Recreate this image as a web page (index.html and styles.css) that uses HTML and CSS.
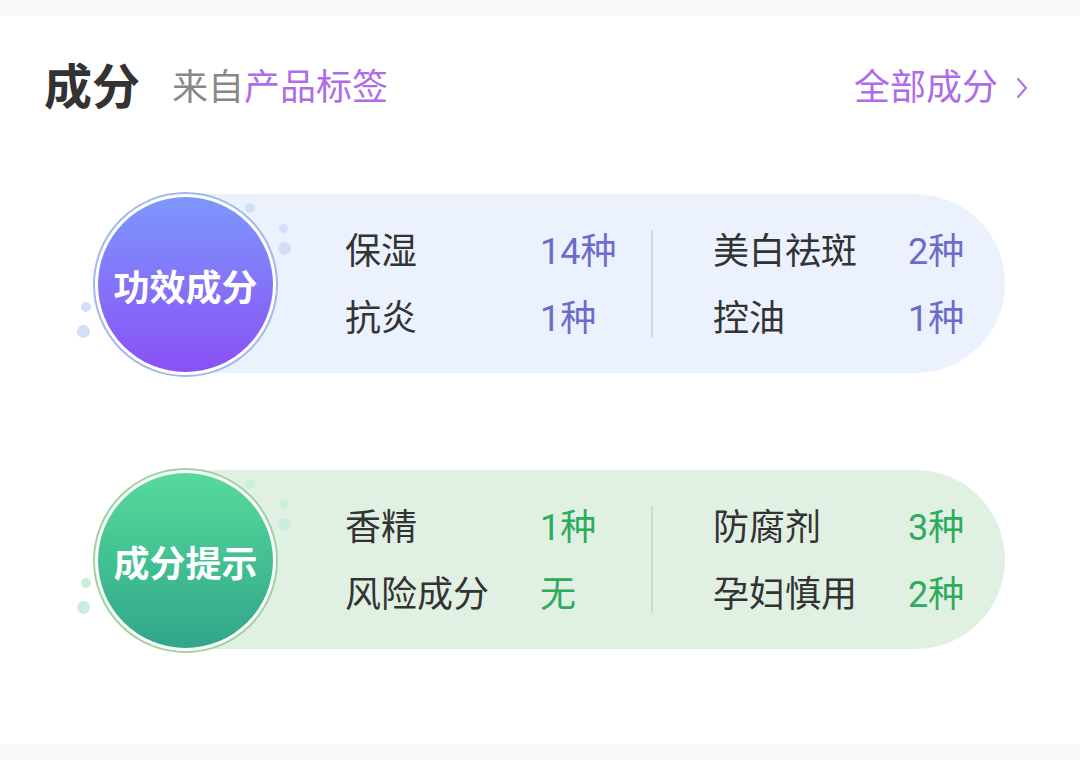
FILE: index.html
```html
<!DOCTYPE html>
<html lang="zh">
<head>
<meta charset="utf-8">
<link rel="stylesheet" href="styles.css">
</head>
<body>
<section class="card">
  <header class="head">
    <h2 class="title">成分</h2>
    <span class="source">来自<em>产品标签</em></span>
    <a class="all">全部成分<svg class="chev" width="12" height="22" viewBox="0 0 12 22"><path d="M2 2 L10 11 L2 20" fill="none" stroke="#b06ce8" stroke-width="2" stroke-linecap="round" stroke-linejoin="round"/></svg></a>
  </header>

  <div class="block blue">
    <div class="badge-wrap">
      <span class="dot d1"></span><span class="dot d2"></span><span class="dot d3"></span><span class="dot d4"></span><span class="dot d5"></span>
      <div class="badge">功效成分</div>
    </div>
    <div class="pill">
      <div class="col">
        <span class="lab">保湿</span><span class="val">14种</span>
        <span class="lab">抗炎</span><span class="val">1种</span>
      </div>
      <div class="divider"></div>
      <div class="col right">
        <span class="lab">美白祛斑</span><span class="val">2种</span>
        <span class="lab">控油</span><span class="val">1种</span>
      </div>
    </div>
  </div>

  <div class="block green">
    <div class="badge-wrap">
      <span class="dot d1"></span><span class="dot d2"></span><span class="dot d3"></span><span class="dot d4"></span><span class="dot d5"></span>
      <div class="badge">成分提示</div>
    </div>
    <div class="pill">
      <div class="col">
        <span class="lab">香精</span><span class="val">1种</span>
        <span class="lab">风险成分</span><span class="val">无</span>
      </div>
      <div class="divider"></div>
      <div class="col right">
        <span class="lab">防腐剂</span><span class="val">3种</span>
        <span class="lab">孕妇慎用</span><span class="val">2种</span>
      </div>
    </div>
  </div>
</section>
</body>
</html>
```

FILE: styles.css
```css
html, body {
  margin: 0;
  padding: 0;
  background: #f8f8f8;
  font-family: Roboto, "Noto Sans CJK SC", sans-serif;
}
.card {
  margin-top: 16px;
  height: 728px;
  background: #ffffff;
  box-sizing: border-box;
  padding: 48px 0 0 0;
}
.head {
  display: flex;
  align-items: center;
  height: 48px;
  padding: 0 52px 0 44px;
}
.title {
  margin: 0;
  font-size: 48px;
  line-height: 48px;
  font-weight: 700;
  color: #333333;
}
.source {
  margin-left: 32px;
  font-size: 36px;
  line-height: 48px;
  color: #888888;
}
.source em {
  font-style: normal;
  color: #b06ce8;
}
.all {
  margin-left: auto;
  display: flex;
  align-items: center;
  font-size: 36px;
  line-height: 48px;
  color: #b06ce8;
}
.chev {
  margin-left: 18px;
}
.block {
  display: flex;
  align-items: center;
  margin-left: 93px;
  height: 185px;
}
.block.blue { margin-top: 80px; }
.block.green { margin-top: 91px; }
.badge-wrap {
  position: relative;
  z-index: 1;
  width: 185px;
  height: 185px;
  flex: none;
}
.badge {
  box-sizing: border-box;
  width: 185px;
  height: 185px;
  border-radius: 50%;
  padding: 3px;
  display: flex;
  align-items: center;
  justify-content: center;
  color: #ffffff;
  font-size: 36px;
  font-weight: 700;
  font-family: "Noto Sans CJK SC", sans-serif;
}
.blue .badge {
  border: 2px solid #a4b8ef;
  background: linear-gradient(180deg, #7c98fc 0%, #8a50f5 100%) content-box, #ffffff;
}
.green .badge {
  border: 2px solid #9dd49d;
  background: linear-gradient(180deg, #56da9a 0%, #30a68b 100%) content-box, #ffffff;
}
.dot {
  position: absolute;
  border-radius: 50%;
}
.blue .dot { background: #d3def8; }
.green .dot { background: #c9eedb; }
.d1 { left: 152px; top: 11px; width: 10px; height: 10px; }
.d2 { left: 186px; top: 32px; width: 9px; height: 9px; }
.d3 { left: 185px; top: 50px; width: 13px; height: 13px; }
.d4 { left: -12px; top: 110px; width: 10px; height: 10px; }
.d5 { left: -16px; top: 133px; width: 13px; height: 13px; }
.pill {
  margin-left: -93px;
  margin-top: -3px;
  width: 820px;
  height: 179px;
  box-sizing: border-box;
  padding-left: 160px;
  border-radius: 0 90px 90px 0;
  display: flex;
  align-items: center;
}
.blue .pill { background: #ebf2fe; }
.green .pill { background: #e0f1e4; }
.col {
  width: 306px;
  display: grid;
  grid-template-columns: 195px auto;
  row-gap: 17px;
  margin-top: 4px;
}
.col.right {
  width: auto;
  padding-left: 60px;
}
.lab {
  font-size: 36px;
  line-height: 50px;
  color: #333333;
}
.val {
  font-size: 36px;
  line-height: 50px;
}
.blue .val { color: #6c6ccb; }
.green .val { color: #2eab5b; }
.divider {
  width: 2px;
  height: 107px;
  flex: none;
}
.blue .divider { background: #c8d7f4; }
.green .divider { background: #bfe2c9; }
```
